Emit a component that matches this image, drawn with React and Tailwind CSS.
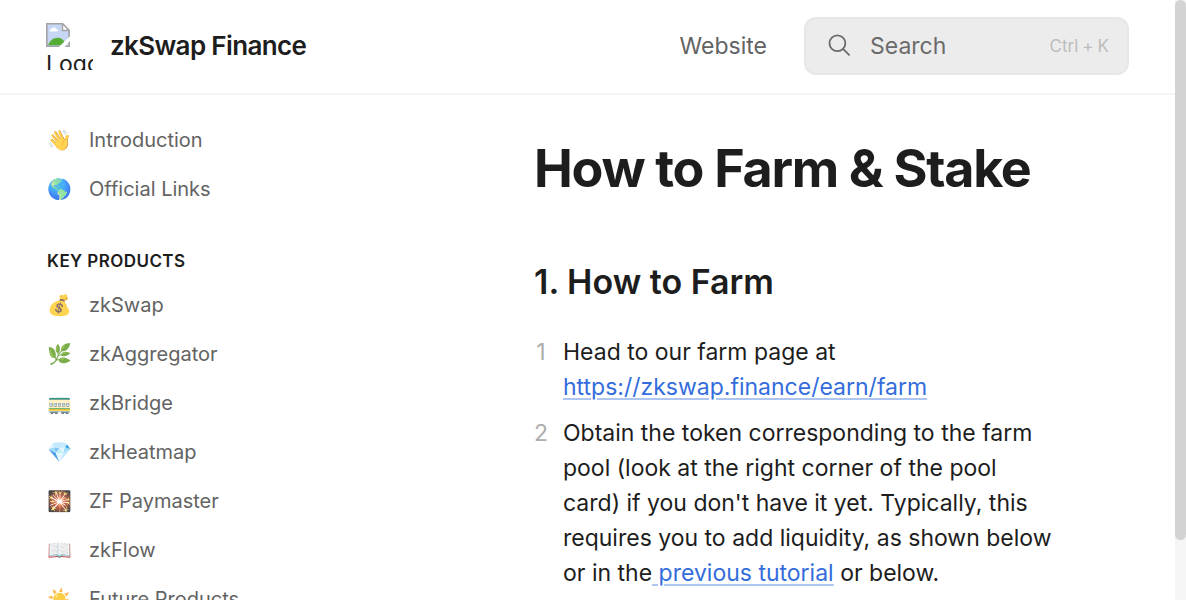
const introLinks = [
  { icon: '👋', label: 'Introduction' },
  { icon: '🌎', label: 'Official Links' },
];

const productLinks = [
  { icon: '💰', label: 'zkSwap' },
  { icon: '🌿', label: 'zkAggregator' },
  { icon: '🚃', label: 'zkBridge' },
  { icon: '💎', label: 'zkHeatmap' },
  { icon: '🎇', label: 'ZF Paymaster' },
  { icon: '📖', label: 'zkFlow' },
  { icon: '☀️', label: 'Future Products' },
];

function MissingImage() {
  return (
    <svg viewBox="0 0 24 24" className="block size-6 shrink-0" aria-hidden="true">
      <path d="M0.8 0.8H16.5L23.2 7.5V23.2H0.8Z" fill="#c6d7f5" stroke="#a3a3a3" strokeWidth="1.6" />
      <path d="M4 8.4C3 6.5 5 5.8 5.8 6C6.5 3.8 9.6 4 10 6C12 6 12.5 8.4 11 8.4Z" fill="#fff" />
      <path d="M2 22.2C4 17.5 7.5 14.8 11.5 14.8C15.5 14.8 18.5 17 19.5 22.2Z" fill="#56ad35" />
      <path d="M12.5 24.2L24.2 13V17.5L18.5 24.2Z" fill="#fff" />
      <path d="M16.5 0.8V7.5H23.2Z" fill="#fff" stroke="#a3a3a3" strokeWidth="1.4" />
    </svg>
  );
}

function SearchIcon() {
  return (
    <svg viewBox="0 0 24 24" className="size-6 shrink-0" fill="none" stroke="currentColor" strokeWidth="1.8" aria-hidden="true">
      <circle cx="9.4" cy="9.2" r="7.9" />
      <path d="M15 14.8L21.6 21.4" />
    </svg>
  );
}

function NavList({ items }) {
  return (
    <ul className="flex flex-col">
      {items.map(({ icon, label }) => (
        <li key={label}>
          <a href="#" className="flex h-[49px] items-center gap-4 text-[20px] leading-7 text-[#636363]">
            <span className="w-[26px] shrink-0 opacity-80" aria-hidden="true">{icon}</span>
            {label}
          </a>
        </li>
      ))}
    </ul>
  );
}

const linkClass =
  'text-[#346ddb] underline decoration-[#346ddb]/40 decoration-2 underline-offset-[3px]';

export default function App() {
  return (
    <div className="flex h-screen overflow-hidden bg-white font-['Inter','Noto_Color_Emoji',sans-serif] text-[#1d1d1d]">
      <div className="flex min-w-0 flex-1 flex-col">
        <header className="flex shrink-0 items-center justify-between border-b-2 border-[#f5f5f5] pt-[17px] pr-[46px] pb-[18px] pl-[46px]">
          <a href="#" className="flex items-center gap-[17px]">
            <span className="size-[47px] overflow-hidden text-[23px] leading-[35px]">
              <MissingImage />
              Logo
            </span>
            <span className="text-[26px] leading-8 font-semibold tracking-tight">zkSwap Finance</span>
          </a>
          <div className="flex items-center gap-[37px]">
            <a href="#" className="text-[23px] leading-[35px] text-[#636363]">Website</a>
            <button type="button" className="flex h-[58px] w-[325px] items-center rounded-xl border-2 border-[#e7e7e7] bg-[#ececec] px-[18px] text-[#6b6b6b]">
              <span className="mr-[18px] ml-1 flex"><SearchIcon /></span>
              <span className="flex-1 text-left text-[23px] leading-[35px]">Search</span>
              <span className="flex gap-1 text-[17px] leading-6 text-[#bcbcbc]">
                <kbd className="font-[inherit]">Ctrl</kbd>
                <span>+</span>
                <kbd className="font-[inherit]">K</kbd>
              </span>
            </button>
          </div>
        </header>
        <div className="flex min-h-0 flex-1 overflow-hidden">
          <nav aria-label="Pages" className="w-[418px] shrink-0 pt-5 pl-[47px]">
            <NavList items={introLinks} />
            <h2 className="mt-[36px] mb-[7px] text-[17px] leading-6 font-semibold tracking-wide uppercase">Key Products</h2>
            <NavList items={productLinks} />
          </nav>
          <main className="min-w-0 flex-1 pt-[45px] pr-[116px] pl-[116px]">
            <h1 className="text-[52px] leading-[58px] font-bold tracking-tight">How to Farm &amp; Stake</h1>
            <h2 className="mt-[62px] text-[34px] leading-[44px] font-semibold">1. How to Farm</h2>
            <ol className="mt-[31px] flex flex-col gap-[11px] text-[23px] leading-[35px]">
              <li className="flex gap-[15px]">
                <span className="w-[14px] shrink-0 text-center text-[#adadad]">1</span>
                <p>
                  Head to our farm page at <a href="#" className={linkClass}>https://zkswap.finance/earn/farm</a>
                </p>
              </li>
              <li className="flex gap-[15px]">
                <span className="w-[14px] shrink-0 text-center text-[#adadad]">2</span>
                <p>
                  Obtain the token corresponding to the farm pool (look at the right corner of the pool
                  card) if you don't have it yet. Typically, this requires you to add liquidity, as shown
                  below or in the<a href="#" className={linkClass}> previous tutorial</a> or below.
                </p>
              </li>
            </ol>
          </main>
        </div>
      </div>
      <div className="w-[11px] shrink-0 bg-[#f5f5f5]" aria-hidden="true">
        <div className="h-[90%] rounded-full bg-[#d3d3d3]" />
      </div>
    </div>
  );
}
